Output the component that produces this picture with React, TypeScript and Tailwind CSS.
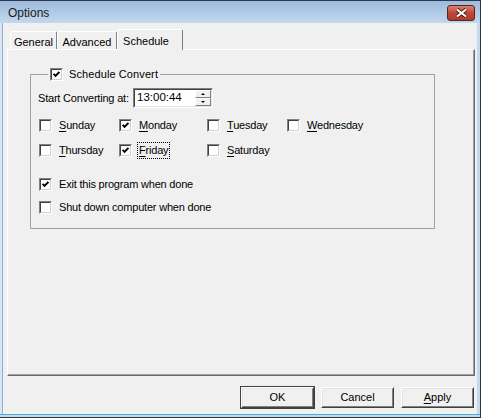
import React from "react";

const font = "font-['Liberation_Sans',Arial,sans-serif]";

const Check = () => (
  <svg width="7" height="7" viewBox="0 0 7 7" className="block">
    <path d="M0.6 2.8 L2.5 4.8 L6.4 0.9" fill="none" stroke="#000" strokeWidth="1.9" />
  </svg>
);

const CheckBox = ({ checked }: { checked?: boolean }) => (
  <div className="w-[13px] h-[13px] shrink-0 border border-t-[#808080] border-l-[#808080] border-b-white border-r-white">
    <div className="w-full h-full bg-white border border-t-[#404040] border-l-[#404040] border-b-[#d4d0c8] border-r-[#d4d0c8] flex items-center justify-center">
      {checked && <Check />}
    </div>
  </div>
);

const Option = ({
  label,
  u,
  checked,
  focus,
}: {
  label: string;
  u?: boolean;
  checked?: boolean;
  focus?: boolean;
}) => (
  <div className="flex items-center h-[20px] gap-[5px]">
    <CheckBox checked={checked} />
    <span
      className={
        "leading-[15px] px-px tracking-[-0.2px] " +
        (focus ? "border border-dotted border-black" : "border border-transparent")
      }
    >
      {u ? (
        <>
          <span className="underline underline-offset-2">{label[0]}</span>
          {label.slice(1)}
        </>
      ) : (
        label
      )}
    </span>
  </div>
);

const Button = ({ children, def }: { children: React.ReactNode; def?: boolean }) => (
  <div
    className={
      "w-[75px] h-[23px] " + (def ? "border border-[#404040]" : "border border-transparent")
    }
  >
    <div className="w-full h-full border border-t-white border-l-white border-b-[#404040] border-r-[#404040]">
      <div className="w-full h-full border border-t-[#e3e3e3] border-l-[#e3e3e3] border-b-[#808080] border-r-[#808080] flex items-center justify-center bg-[#f0f0f0]">
        {children}
      </div>
    </div>
  </div>
);

const Tab = ({ label, w, active }: { label: string; w: string; active?: boolean }) => (
  <div
    className={
      w +
      " flex items-start justify-center border-t border-l border-t-white border-l-white border-r border-r-[#808080] rounded-t-[2px] bg-[#f0f0f0] " +
      (active ? "h-[21px] pt-[3px] -mb-px relative z-10 pr-[8px]" : "h-[18px] pt-[2px]")
    }
  >
    {label}
  </div>
);

export default function App() {
  return (
    <div
      className={
        font +
        " w-[481px] h-[418px] flex flex-col bg-[#c4d9ee] border-t border-r border-[#2a3a4c] text-[11px] text-black overflow-hidden"
      }
    >
      {/* title bar */}
      <div className="h-[22px] shrink-0 flex items-center justify-between bg-gradient-to-b from-[#9dbbdc] to-[#c2d8ee] pl-[8px] pr-[5px]">
        <span className="text-[12px] text-[#1a1a1a] pt-[2px]">Options</span>
        <div className="w-[28px] h-[16px] mt-[2px] rounded-[3px] border border-[#5a2420] bg-gradient-to-b from-[#d88070] via-[#c04634] to-[#b03c30] flex items-center justify-center">
          <svg width="13" height="10" viewBox="0 0 13 10">
            <path d="M2 1.5 L11 8.5 M11 1.5 L2 8.5" stroke="#4a1c18" strokeWidth="4" />
            <path d="M2 1.5 L11 8.5 M11 1.5 L2 8.5" stroke="#fff" strokeWidth="2.2" />
          </svg>
        </div>
      </div>

      <div className="flex flex-1 min-h-0">
        <div className="w-[3px] bg-[#d8e6f4] border-r border-[#8fb0d0]" />
        {/* client area */}
        <div className="w-[474px] bg-[#f0f0f0] flex flex-col pt-[6px] pl-[4px] pr-[2px]">
          <div className="flex items-end pl-[3px] h-[20px]">
            <Tab label="General" w="w-[47px]" />
            <Tab label="Advanced" w="w-[60px]" />
            <Tab label="Schedule" w="w-[66px]" active />
          </div>
          {/* tab panel */}
          <div className="h-[327px] border border-t-white border-l-white border-r-[#696969] border-b-[#696969]">
            <div className="h-full border-r border-b border-r-[#a0a0a0] border-b-[#a0a0a0] pl-[22px] pt-[18px]">
              <fieldset className="w-[405px] border border-[#a0a0a0] pl-[7px] pb-[11px]">
                <legend className="ml-[10px] px-[2px]">
                  <div className="flex items-center gap-[6px] h-[13px]">
                    <CheckBox checked />
                    <span className="tracking-[0.1px]">Schedule Convert</span>
                  </div>
                </legend>
                <div className="flex items-center mt-[7px] h-[20px]">
                  <span className="w-[95px] tracking-[-0.2px]">Start Converting at:</span>
                  <div className="w-[80px] h-[20px] border border-t-[#808080] border-l-[#808080] border-b-white border-r-white">
                    <div className="w-full h-full bg-white border border-t-[#404040] border-l-[#404040] border-b-[#e3e3e3] border-r-[#e3e3e3] flex items-center justify-between">
                      <span className="pl-[2px] text-[11.5px]">13:00:44</span>
                      <div className="w-[16px] h-full flex flex-col">
                        <div className="flex-1 bg-[#f0f0f0] border border-t-white border-l-white border-b-[#808080] border-r-[#808080] flex items-center justify-center">
                          <div className="w-0 h-0 border-l-[2px] border-r-[2px] border-b-[2px] border-transparent border-b-black" />
                        </div>
                        <div className="flex-1 bg-[#f0f0f0] border border-t-white border-l-white border-b-[#808080] border-r-[#808080] flex items-center justify-center">
                          <div className="w-0 h-0 border-l-[2px] border-r-[2px] border-t-[2px] border-transparent border-t-black" />
                        </div>
                      </div>
                    </div>
                  </div>
                </div>
                <div className="ml-px mt-[7px] grid grid-cols-[80px_88px_80px_auto] gap-y-[5px]">
                  <Option label="Sunday" u />
                  <Option label="Monday" u checked />
                  <Option label="Tuesday" u />
                  <Option label="Wednesday" u />
                  <Option label="Thursday" u />
                  <Option label="Friday" u checked focus />
                  <Option label="Saturday" u />
                </div>
                <div className="ml-px mt-[14px] flex flex-col gap-[3px]">
                  <Option label="Exit this program when done" checked />
                  <Option label="Shut down computer when done" />
                </div>
              </fieldset>
            </div>
          </div>
          {/* buttons */}
          <div className="flex justify-end gap-[5px] mt-[10px]">
            <Button def>OK</Button>
            <Button>Cancel</Button>
            <Button>
              <span>
                <span className="underline underline-offset-2">A</span>pply
              </span>
            </Button>
          </div>
        </div>
        <div className="flex-1 bg-[#c4d9ee]" />
      </div>
      <div className="h-[4px] shrink-0 bg-[#c4d9ee] border-t border-[#3fb0d8] border-b border-b-[#2a3a4c]" />
    </div>
  );
}
